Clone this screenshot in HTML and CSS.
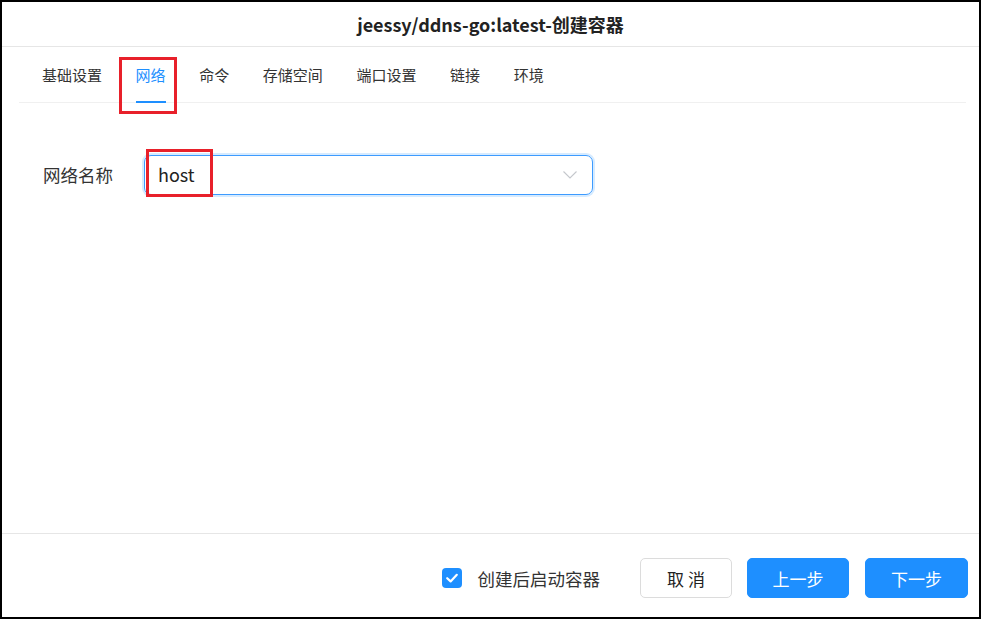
FILE: index.html
```html
<!DOCTYPE html>
<html lang="zh-CN">
<head>
<meta charset="utf-8">
<title>创建容器</title>
<link rel="stylesheet" href="styles.css">
</head>
<body>
<div class="dialog">
  <header class="dialog-header">
    <h1 class="dialog-title">jeessy/ddns-go:latest-创建容器</h1>
  </header>
  <nav class="tabs">
    <span class="tab">基础设置</span>
    <span class="tab tab-active">网络<i class="mark mark-tab"></i></span>
    <span class="tab">命令</span>
    <span class="tab">存储空间</span>
    <span class="tab">端口设置</span>
    <span class="tab">链接</span>
    <span class="tab">环境</span>
  </nav>
  <main class="dialog-body">
    <div class="form-row">
      <label class="form-label">网络名称</label>
      <div class="select">
        <span class="select-value">host</span>
        <svg class="select-arrow" width="14" height="8" viewBox="0 0 14 8"><polyline points="0.5,0.5 7,7 13.5,0.5" fill="none" stroke="#c4c7cc" stroke-width="1.1"/></svg>
        <i class="mark mark-host"></i>
      </div>
    </div>
  </main>
  <footer class="dialog-footer">
    <label class="check">
      <span class="check-box"><svg width="20" height="20" viewBox="0 0 20 20"><polyline points="5.2,10.2 8.6,13.4 14.8,6.8" fill="none" stroke="#fff" stroke-width="2.2" stroke-linecap="round" stroke-linejoin="round"/></svg></span>
      <span class="check-text">创建后启动容器</span>
    </label>
    <button class="btn btn-default">取 消</button>
    <button class="btn btn-primary btn-prev">上一步</button>
    <button class="btn btn-primary btn-next">下一步</button>
  </footer>
</div>
</body>
</html>
```

FILE: styles.css
```css
html, body {
  margin: 0;
  padding: 0;
  background: #fff;
}
body {
  font-family: "Noto Sans CJK SC", "Noto Sans", sans-serif;
  color: #333;
}
.dialog {
  width: 981px;
  height: 619px;
  box-sizing: border-box;
  border: 2px solid #000;
  display: flex;
  flex-direction: column;
  background: #fff;
}
.dialog-header {
  height: 44px;
  border-bottom: 1px solid #e6e6e6;
  display: flex;
  align-items: center;
  justify-content: center;
}
.dialog-title {
  margin: 0;
  font-size: 18px;
  font-weight: 700;
  color: #222;
  line-height: 24px;
}
.tabs {
  display: flex;
  height: 55px;
  margin: 0 13px 0 17px;
  padding-left: 23px;
  gap: 33.6px;
  border-bottom: 1px solid #f0f0f0;
}
.tab {
  position: relative;
  box-sizing: border-box;
  height: 56px;
  padding-top: 18px;
  font-size: 15px;
  line-height: 20px;
  color: #333;
  border-bottom: 2px solid transparent;
}
.tab-active {
  color: #1e8fff;
  border-bottom-color: #1e8fff;
}
.mark {
  position: absolute;
  border: 3px solid #e8202a;
  box-sizing: border-box;
  pointer-events: none;
}
.mark-tab {
  left: -17px;
  top: 10px;
  width: 58px;
  height: 57px;
}
.dialog-body {
  flex: 1;
  padding: 52px 0 0 41px;
}
.form-row {
  display: flex;
  align-items: center;
  gap: 31px;
}
.form-label {
  font-size: 17.5px;
  color: #333;
  line-height: 24px;
}
.select {
  position: relative;
  box-sizing: border-box;
  width: 449px;
  height: 40px;
  border: 1px solid #3d9bff;
  border-radius: 7px;
  box-shadow: 0 0 0 2px rgba(30, 143, 255, 0.18);
  display: flex;
  align-items: center;
  justify-content: space-between;
  padding: 0 15px 2px 13px;
}
.select-value {
  font-size: 18px;
  color: #222;
  line-height: 24px;
}
.select-arrow {
  display: block;
  margin-top: 2px;
}
.mark-host {
  left: 1px;
  top: -7px;
  width: 67px;
  height: 48px;
}
.dialog-footer {
  height: 84px;
  box-sizing: border-box;
  border-top: 1px solid #e6e6e6;
  display: flex;
  align-items: flex-start;
  justify-content: flex-end;
  padding: 24px 11px 0 0;
}
.check {
  display: flex;
  align-items: center;
  height: 40px;
  gap: 16px;
  margin-right: 40px;
}
.check-box {
  width: 20px;
  height: 20px;
  border-radius: 4px;
  background: #1e8fff;
  display: block;
}
.check-box svg {
  display: block;
}
.check-text {
  font-size: 17.5px;
  color: #333;
}
.btn {
  height: 40px;
  box-sizing: border-box;
  border-radius: 5px;
  font-family: inherit;
  font-size: 17px;
  padding: 0;
  cursor: pointer;
}
.btn-default {
  width: 92px;
  background: #fff;
  border: 1px solid #dcdcdc;
  color: #222;
  margin-right: 15px;
}
.btn-primary {
  background: #1e8fff;
  border: 1px solid #1e8fff;
  color: #fff;
}
.btn-prev {
  width: 102px;
  margin-right: 16px;
}
.btn-next {
  width: 103px;
}
```
